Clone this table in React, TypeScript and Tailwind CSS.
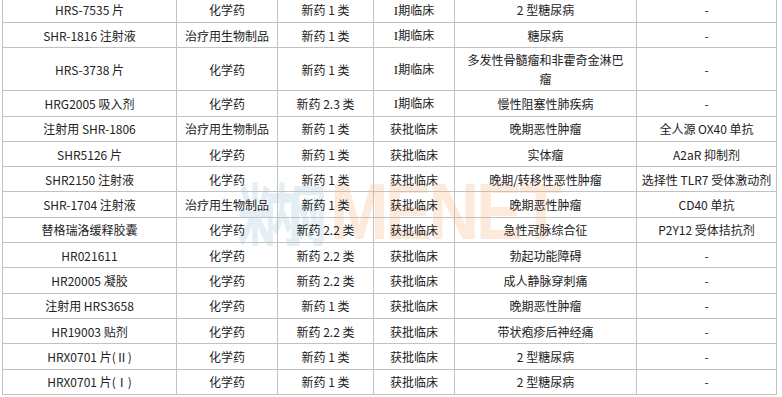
import React from "react";

const rows: string[][] = [
  ["HRS-7535 片", "化学药", "新药 1 类", "I期临床", "2 型糖尿病", "-"],
  ["SHR-1816 注射液", "治疗用生物制品", "新药 1 类", "I期临床", "糖尿病", "-"],
  ["HRS-3738 片", "化学药", "新药 1 类", "I期临床", "多发性骨髓瘤和非霍奇金淋巴瘤", "-"],
  ["HRG2005 吸入剂", "化学药", "新药 2.3 类", "I期临床", "慢性阻塞性肺疾病", "-"],
  ["注射用 SHR-1806", "治疗用生物制品", "新药 1 类", "获批临床", "晚期恶性肿瘤", "全人源 OX40 单抗"],
  ["SHR5126 片", "化学药", "新药 1 类", "获批临床", "实体瘤", "A2aR 抑制剂"],
  ["SHR2150 注射液", "化学药", "新药 1 类", "获批临床", "晚期/转移性恶性肿瘤", "选择性 TLR7 受体激动剂"],
  ["SHR-1704 注射液", "治疗用生物制品", "新药 1 类", "获批临床", "晚期恶性肿瘤", "CD40 单抗"],
  ["替格瑞洛缓释胶囊", "化学药", "新药 2.2 类", "获批临床", "急性冠脉综合征", "P2Y12 受体拮抗剂"],
  ["HR021611", "化学药", "新药 2.2 类", "获批临床", "勃起功能障碍", "-"],
  ["HR20005 凝胶", "化学药", "新药 2.2 类", "获批临床", "成人静脉穿刺痛", "-"],
  ["注射用 HRS3658", "化学药", "新药 1 类", "获批临床", "晚期恶性肿瘤", "-"],
  ["HR19003 贴剂", "化学药", "新药 2.2 类", "获批临床", "带状疱疹后神经痛", "-"],
  ["HRX0701 片(Ⅱ)", "化学药", "新药 1 类", "获批临床", "2 型糖尿病", "-"],
  ["HRX0701 片(Ⅰ)", "化学药", "新药 1 类", "获批临床", "2 型糖尿病", "-"],
];

function Cell({ text }: { text: string }) {
  if (text === "I期临床") {
    return (
      <>
        <span className="font-['Liberation_Serif',serif] text-[13px]">I</span>期临床
      </>
    );
  }
  return <>{text}</>;
}

export default function App() {
  return (
    <div className="relative w-[782px] h-[397px] overflow-hidden bg-white font-['Noto_Sans_CJK_SC',sans-serif] text-[12px] text-[#222]">
      <div className="absolute left-[238px] top-[172px] flex items-center pointer-events-none select-none">
        <div className="w-[92px] overflow-hidden">
          <span className="font-['Noto_Sans_CJK_SC',sans-serif] font-black text-[68px] leading-none text-[#e3eff4] tracking-[-14px] scale-x-[0.5] origin-left whitespace-nowrap inline-block">米内网</span>
        </div>
        <span className="font-['Liberation_Sans',sans-serif] font-bold text-[80px] leading-none text-[#feeadb] tracking-[-4px] scale-x-[0.88] origin-left whitespace-nowrap inline-block">MENET</span>
      </div>
      <table className="relative table-fixed border-collapse ml-[2px] mt-[-3.3px] w-[774px]">
        <colgroup>
          <col className="w-[174px]" />
          <col className="w-[101px]" />
          <col className="w-[96px]" />
          <col className="w-[81px]" />
          <col className="w-[182px]" />
          <col className="w-[140px]" />
        </colgroup>
        <tbody>
          {rows.map((r, i) => (
            <tr key={i} className="h-[25.3px]">
              {r.map((c, j) => (
                <td
                  key={j}
                  className={
                    j === 4
                      ? "border border-[#c2c2c2] text-center align-middle px-[10px] py-[2px] leading-[19px]"
                      : "border border-[#c2c2c2] text-center align-middle px-0 py-[2px] leading-[19px] whitespace-nowrap"
                  }
                >
                  <Cell text={c} />
                </td>
              ))}
            </tr>
          ))}
        </tbody>
      </table>
    </div>
  );
}
